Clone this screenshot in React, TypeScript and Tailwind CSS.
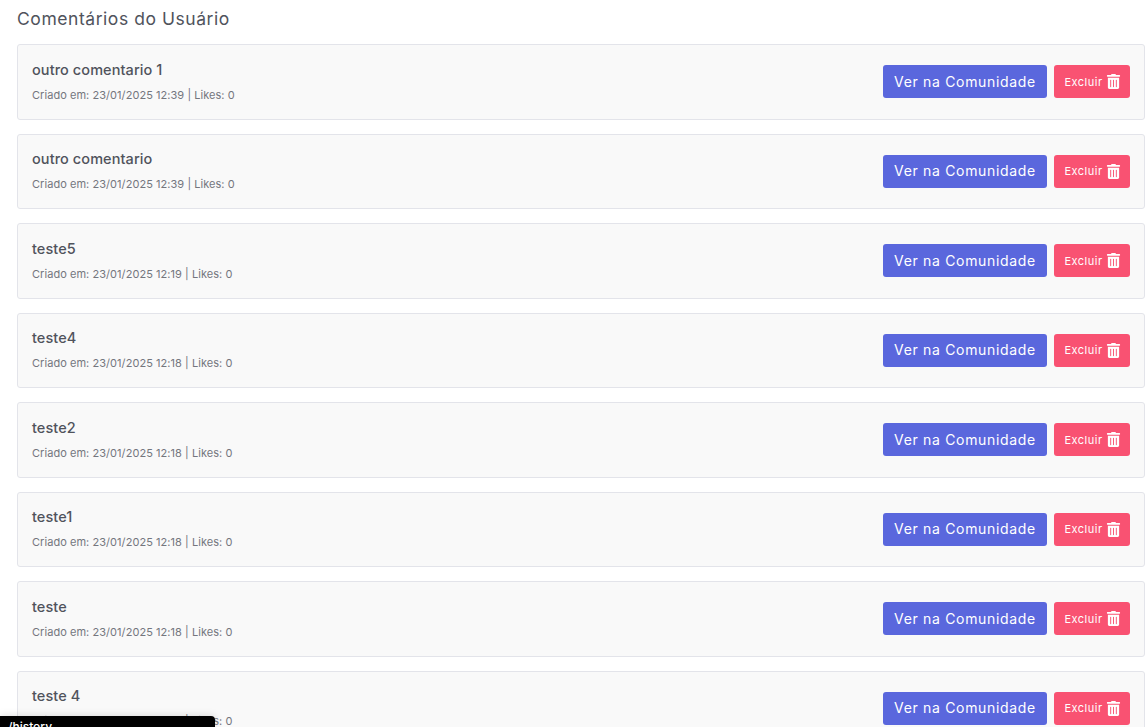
import React from 'react';
import { FaTrashAlt } from 'react-icons/fa';

const comments = [
    { text: 'outro comentario 1', date: '23/01/2025 12:39' },
    { text: 'outro comentario', date: '23/01/2025 12:39' },
    { text: 'teste5', date: '23/01/2025 12:19' },
    { text: 'teste4', date: '23/01/2025 12:18' },
    { text: 'teste2', date: '23/01/2025 12:18' },
    { text: 'teste1', date: '23/01/2025 12:18' },
    { text: 'teste', date: '23/01/2025 12:18' },
    { text: 'teste 4', date: '23/01/2025 12:18' },
];

const App: React.FC = () => {
    return (
        <div className="relative h-[727px] overflow-hidden bg-white font-['Inter','Open_Sans',sans-serif]">
            <div className="pl-[17px] pr-[3px] pt-[8px]">
                <h2 className="mb-[15px] h-[21px] text-[17.5px] leading-[21px] font-normal tracking-[0.55px] text-[#50535c]">
                    Comentários do Usuário
                </h2>
                {comments.map((c) => (
                    <div
                        key={c.text}
                        className="mb-[14px] flex h-[75.5px] items-center justify-between rounded-[3px] border border-[#e3e4ea] bg-[#f9f9f9] pl-[14px] pr-[14px]"
                    >
                        <div className="flex flex-col">
                            <span className="text-[14.5px] leading-[20px] font-medium tracking-[0.08px] text-[#50535c]">{c.text}</span>
                            <span className="mt-[7px] mb-[1px] text-[11px] leading-[16px] tracking-[0.05px] text-[#74767e]">
                                Criado em: {c.date} | Likes: 0
                            </span>
                        </div>
                        <div className="flex items-center gap-[7px]">
                            <button className="flex h-[33px] w-[164px] items-center justify-center rounded-[3px] bg-[#5a67dd] pb-[1px] text-[14px] tracking-[0.67px] text-white">
                                Ver na Comunidade
                            </button>
                            <button className="flex h-[33px] w-[76px] items-center justify-center gap-[3px] rounded-[3px] bg-[#f95272] pl-[1px] text-[11px] tracking-[0.5px] text-white">
                                Excluir
                                <FaTrashAlt className="text-[15px]" />
                            </button>
                        </div>
                    </div>
                ))}
            </div>
            <div className="absolute bottom-0 left-0 h-[11px] w-[215px] rounded-tr-[4px] bg-black pl-[8px] text-[12px] leading-[22px] font-medium text-white shadow-[0_0_8px_rgba(0,0,0,0.15)]">
                /history
            </div>
        </div>
    );
};

export default App;
